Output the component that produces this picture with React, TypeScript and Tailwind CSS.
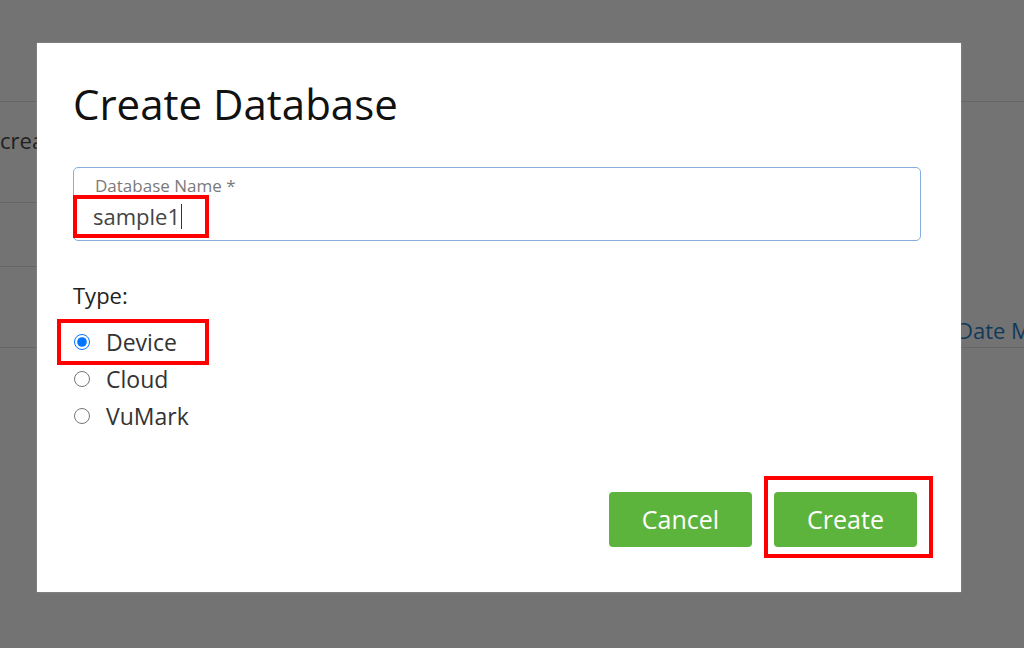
import { useState } from "react";

const types = ["Device", "Cloud", "VuMark"];

const CreateDatabaseDialog = () => {
  const [type, setType] = useState("Device");

  return (
    <div className="flex h-[549px] w-[924px] flex-col bg-white px-9 shadow-[0_0_2px_rgba(255,255,255,0.25)]">
      <h2 className="mt-[32px] text-[42px] leading-[57px] text-[#111]">
        Create Database
      </h2>

      <div className="mt-[35px] flex h-[74px] w-[848px] flex-col rounded-[5px] border border-[#86aedc] pt-[6px] pl-[21px]">
        <label className="text-[17px] leading-[23px] text-[#7a7a7a]">
          Database Name *
        </label>
        <div className="relative mt-[4px] -ml-[2px] flex items-center self-start text-[22px] leading-[30px] text-[#444]">
          sample1
          <span className="ml-px h-[25px] w-px bg-[#333]" />
          <div className="absolute -top-[6px] -left-[20px] h-[43px] w-[136px] border-4 border-[#ff0000]" />
        </div>
      </div>

      <p className="mt-[39px] text-[22px] leading-[30px] text-[#222]">Type:</p>

      <div className="mt-[13px] flex flex-col">
        {types.map((t) => (
          <label
            key={t}
            className="relative flex h-[37px] cursor-pointer items-center gap-4 text-[23px] leading-[30px] text-[#333]"
          >
            <input
              type="radio"
              name="db-type"
              checked={type === t}
              onChange={() => setType(t)}
              className="ml-px h-4 w-4"
            />
            {t}
            {t === "Device" && (
              <div className="absolute -top-[4px] -left-[16px] h-[46px] w-[152px] border-4 border-[#ff0000]" />
            )}
          </label>
        ))}
      </div>

      <div className="mt-auto mr-2 mb-[45px] flex justify-end gap-[22px]">
        <button className="h-[55px] w-[143px] rounded-[4px] bg-[#5cb43c] text-[25px] text-white">
          Cancel
        </button>
        <div className="relative">
          <button className="h-[55px] w-[143px] rounded-[4px] bg-[#5cb43c] text-[25px] text-white">
            Create
          </button>
          <div className="absolute -top-[16px] -left-[10px] h-[82px] w-[169px] border-4 border-[#ff0000]" />
        </div>
      </div>
    </div>
  );
};

const App = () => {
  return (
    <div className="relative h-[648px] w-[1024px] overflow-hidden bg-white font-['Open_Sans',sans-serif]">
      {/* page behind the dialog */}
      <div className="flex flex-col">
        <div className="h-[102px] border-b border-[#e2e2e2]" />
        <div className="flex h-[101px] w-[500px] items-center border-b border-[#e2e2e2] pb-[24px] text-[22px] text-[#4a4a4a]">
          <span className="w-[37px] overflow-hidden whitespace-nowrap">create</span>
        </div>
        <div className="h-[64px] w-[500px] border-b border-[#e2e2e2]" />
        <div className="flex h-[81px] items-end border-b border-[#e2e2e2] pb-[2px] pl-[957px] text-[22px] leading-[30px] whitespace-nowrap text-[#2a7fc8]">
          Date Modified
        </div>
      </div>

      <div className="absolute inset-0 bg-black/55 pt-[43px] pl-[37px]">
        <CreateDatabaseDialog />
      </div>
    </div>
  );
};

export default App;
